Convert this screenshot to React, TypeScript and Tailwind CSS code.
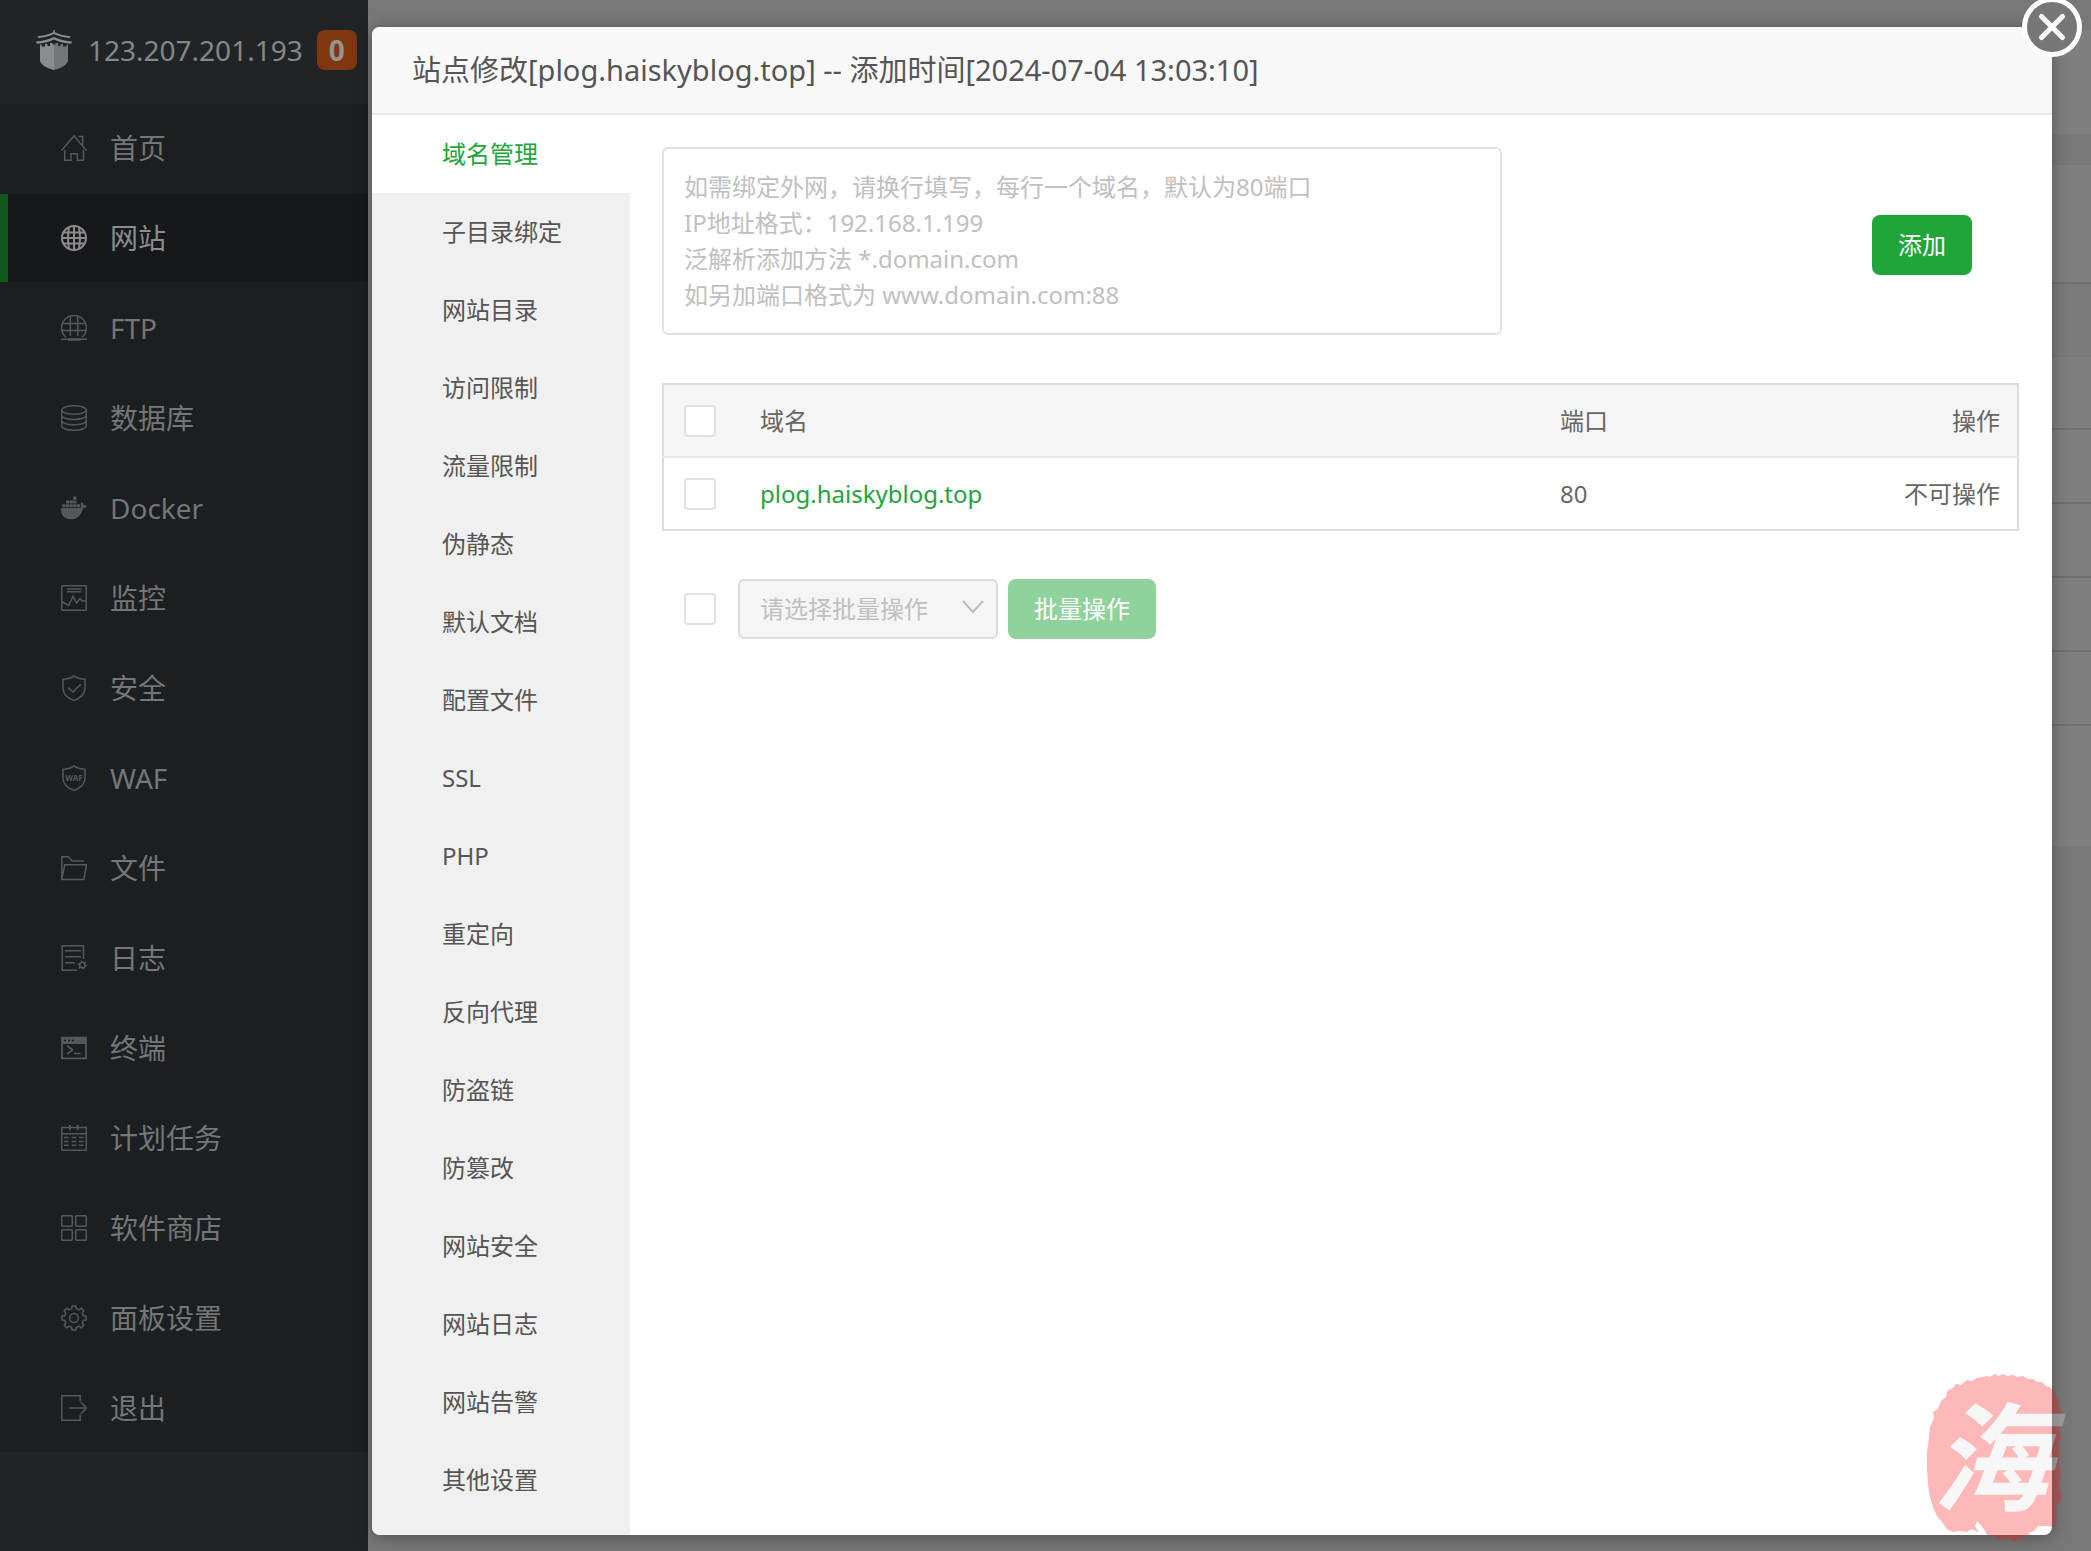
import type { ReactNode } from 'react';

const gearPath = (cx: number, cy: number, outer: number, inner: number, teeth: number) => {
  const points: string[] = [];
  const step = (Math.PI * 2) / teeth;
  for (let i = 0; i < teeth; i++) {
    const a = i * step - Math.PI / 2;
    const corners: [number, number][] = [
      [-0.3, inner],
      [-0.2, outer],
      [0.2, outer],
      [0.3, inner],
    ];
    for (const [offset, r] of corners) {
      const t = a + offset * step;
      points.push(`${(cx + r * Math.cos(t)).toFixed(2)} ${(cy + r * Math.sin(t)).toFixed(2)}`);
    }
  }
  return `M${points.join('L')}Z`;
};

const shield = 'M13 .8C16 3 20 4 24 4.3V13C24 19 19.500 23 13 25.400C6.500 23 2 19 2 13V4.300C6 4 10 3 13 .8Z';

const icons: Record<string, ReactNode> = {
  home: (
    <>
      <path d="M.5 15.500 13 .9l12.500 14.600M17.300 1.500h4.400V10" />
      <path d="M3.700 15v10.300h6.300v-6.500h6.300v6.500h6.200V15" />
    </>
  ),
  globe: (
    <g strokeWidth="2">
      <circle cx="13" cy="13" r="12" />
      <path d="M13 1v24M8 2.500C6.800 9 6.800 17 8 23.500M18 2.500c1.200 6.500 1.200 14.500 0 21M1 13h24M3 7.500h20M3 18.500h20" />
    </g>
  ),
  ftp: (
    <>
      <path d="M5 22.300A12.400 12.400 0 1 1 21 22.300" />
      <path d="M9.300 1.500v19.500M16.700 1.500v19.500M1.500 8.500h23M1 15.500h24M0 24.300h26" />
      <path d="M7 24.500h12.500" strokeWidth="2.500" />
    </>
  ),
  database: (
    <>
      <ellipse cx="13" cy="5" rx="12.300" ry="4.300" />
      <path d="M.7 5v16c0 2.200 5.500 4.300 12.300 4.300s12.300-2.100 12.300-4.300V5M.7 10.500c0 2.200 5.500 4 12.300 4s12.300-1.800 12.300-4M.7 15.800c0 2.200 5.500 4 12.300 4s12.300-1.800 12.300-4" />
    </>
  ),
  docker: (
    <g fill="currentColor" stroke="none">
      <path d="M12.200 1.500h3.200v3.200h-3.200zM5 5.400h3.200v3.200H5zM8.600 5.400h3.200v3.200H8.600zM12.200 5.400h3.200v3.200h-3.200zM1.400 9.300h3.200v3H1.400zM5 9.300h3.200v3H5zM8.600 9.300h3.200v3H8.600zM12.200 9.300h3.200v3h-3.200zM15.800 9.300H19v3h-3.200z" />
      <path d="M.1 12.900h18.400c1.300-.1 1.900-.6 1.500-1.700-.5-1.500-.3-3 .7-4.200 1.100.8 1.700 1.900 1.800 3.100 1.300-.2 2.600.1 3.500.9-.7 1.500-2 2.200-3.900 2.200C20.200 20.500 16 24.300 9.600 24.300 3.200 24.300-.3 20.500.1 12.900Z" />
    </g>
  ),
  monitor: (
    <>
      <rect x=".7" y=".7" width="24.600" height="24.600" rx="1" />
      <path d="M6 4h14.500M6 6.700h14.500M.7 16.500l6.800 4L12 11.500l3.500 6.500L19 13.500l2 2.500h4.300" />
    </>
  ),
  security: (
    <>
      <path d={shield} />
      <path d="M7.200 12.500 12 17l7.800-7.800" />
    </>
  ),
  waf: (
    <>
      <path d={shield} />
      <text x="13" y="16" textAnchor="middle" fontSize="8" fontWeight="700" fill="currentColor" stroke="none">
        WAF
      </text>
    </>
  ),
  folder: <path d="M.8 24.600V1.700h6.500L11.300 6H23M.8 24.600H23l2.400-14.900H3.700Z" />,
  log: (
    <>
      <path d="M22.500 14V.8H1.200v24.500H16M4 5.700h16M4 11.700h16M4 17.700h10" />
      <circle cx="21.300" cy="20" r="2.700" strokeWidth="1.600" />
      <circle cx="21.300" cy="20" r="4" strokeWidth="1.200" strokeDasharray="1.600 2.590" />
    </>
  ),
  terminal: (
    <>
      <path d="M1 2.700h24v20.600H1Z" strokeWidth="1.800" />
      <path d="M1 2h24v7H1z" fill="currentColor" stroke="none" />
      <path d="M3 5.500h2M7 5.500h2M11 5.500h2" stroke="#1b1f21" />
      <path d="m6.200 10.800 5.300 4-5.300 4.200M13 18.500h6.500" strokeWidth="1.700" />
    </>
  ),
  calendar: (
    <>
      <path d="M.7 2.500h24.600v22.800H.7ZM.7 8.700h24.600" />
      <path d="M9 0v5.300M16.700 0v5.300" strokeWidth="1.800" />
      <path d="M3 12.500h4.700M10.700 12.500h4.600M18 12.500h4.600M3 16.500h4.700M10.700 16.500h4.600M18 16.500h4.600M3 20.300h4.700M10.700 20.300h4.600M18 20.300h4.600" />
    </>
  ),
  apps: (
    <>
      <rect x=".7" y=".7" width="10.600" height="10.600" rx="1.200" />
      <rect x="14.700" y=".7" width="10.600" height="10.600" rx="1.200" />
      <rect x=".7" y="14.700" width="10.600" height="10.600" rx="1.200" />
      <rect x="14.700" y="14.700" width="10.600" height="10.600" rx="1.200" />
    </>
  ),
  settings: (
    <>
      <path d={gearPath(13, 13, 12.2, 9.6, 8)} strokeLinejoin="round" />
      <circle cx="13" cy="13" r="4.400" />
    </>
  ),
  logout: <path d="M19.200 6.500V.8H.8v24.500h18.400v-5.500M8.300 13h17M20 7.300l5.500 5.700-5.500 5.700" />,
};

const menu = [
  ['home', '首页'],
  ['globe', '网站'],
  ['ftp', 'FTP'],
  ['database', '数据库'],
  ['docker', 'Docker'],
  ['monitor', '监控'],
  ['security', '安全'],
  ['waf', 'WAF'],
  ['folder', '文件'],
  ['log', '日志'],
  ['terminal', '终端'],
  ['calendar', '计划任务'],
  ['apps', '软件商店'],
  ['settings', '面板设置'],
  ['logout', '退出'],
];

const tabs = [
  '域名管理', '子目录绑定', '网站目录', '访问限制', '流量限制', '伪静态', '默认文档', '配置文件', 'SSL',
  'PHP', '重定向', '反向代理', '防盗链', '防篡改', '网站安全', '网站日志', '网站告警', '其他设置',
];

const placeholder = [
  '如需绑定外网，请换行填写，每行一个域名，默认为80端口',
  'IP地址格式：192.168.1.199',
  '泛解析添加方法 *.domain.com',
  '如另加端口格式为 www.domain.com:88',
].join('\n');

function Check({ label }: { label: string }) {
  return (
    <input
      type="checkbox"
      aria-label={label}
      className="block size-8 shrink-0 appearance-none rounded border-2 border-[#dfe1e6] bg-white checked:bg-[#20a53a]"
    />
  );
}

function Logo() {
  return (
    <svg viewBox="0 0 36 40" className="h-10 w-9 shrink-0" aria-hidden="true">
      <path
        d="M1.500 6.200C7 6 12.500 4.300 17.300 2.300V0h1.400v2.300C23.500 4.300 29 6 34.500 6.200l-.8 1.900C28 7.800 23 6.300 18 4.100 13 6.300 8 7.800 2.300 8.100Z"
        fill="#8c8f90"
      />
      <path d="M0 11.500C6.500 11.300 12.500 9.500 18 7c5.500 2.500 11.500 4.300 18 4.500l-.8 2.200C29 13.400 23.500 11.800 18 9.400 12.500 11.800 7 13.400.8 13.700Z" fill="#8c8f90" />
      <path d="M4 14.500h1.500v2h3.500v-2.500h2.500v2h2.500v-3h2.500v1.500H18V40C11 38.500 5.500 35 4 31Z" fill="#8b8c8d" />
      <path d="M32 14.500h-1.500v2h-3.500v-2.500h-2.500v2H22v-3h-2.500v1.500H18V40c7-1.500 12.500-5 14-9Z" fill="#747677" />
    </svg>
  );
}

function Sidebar() {
  return (
    <aside className="w-[368px] shrink-0 bg-[#202426]">
      <div className="flex h-[104px] items-start gap-4 pt-[30px] pl-9">
        <Logo />
        <span className="text-[28px] leading-10 text-[#858788]">123.207.201.193</span>
        <span className="-ml-0.5 flex size-10 items-center justify-center rounded-lg bg-[#7f3611] text-[28px] font-bold text-[#949494]">
          0
        </span>
      </div>
      <nav className="flex flex-col gap-0.5 bg-[#1b1f21]">
        {menu.map(([icon, label], i) => (
          <a
            key={label}
            href={`#${icon}`}
            aria-current={i === 1 ? 'page' : undefined}
            className={
              i === 1
                ? 'flex h-[88px] items-center gap-[23px] border-l-8 border-[#10571c] bg-[#17181b] pl-[53px] text-[28px] text-[#8c8c8c]'
                : 'flex h-[88px] items-center gap-[23px] pl-[61px] text-[28px] text-[#747677]'
            }
          >
            <svg
              viewBox="0 0 26 26"
              className={i === 1 ? 'size-[26px] text-[#8c8c8c]' : 'size-[26px] text-[#55585a]'}
              fill="none"
              stroke="currentColor"
              strokeWidth="1.500"
              aria-hidden="true"
            >
              {icons[icon]}
            </svg>
            {label}
          </a>
        ))}
      </nav>
    </aside>
  );
}

function Backdrop() {
  return (
    <div className="flex-1 bg-[#787878] pl-5">
      <div className="h-[30px]" />
      <div className="h-[104px] bg-[#7f7f7f]" />
      <div className="h-[31px]" />
      <div className="flex h-[681px] flex-col bg-[#7f7f7f] pt-[117px]">
        <div className="h-[74px] border-t-2 border-[#6f6f6f] bg-[#7b7b7b]" />
        <div className="h-[74px] border-t border-b-2 border-t-[#777] border-b-[#6f6f6f]" />
        <div className="h-[74px] border-b-2 border-[#6f6f6f]" />
        <div className="h-[74px] border-b-2 border-[#6f6f6f]" />
        <div className="h-[74px] border-b-2 border-[#6f6f6f]" />
        <div className="h-[74px] border-b-2 border-[#6f6f6f]" />
      </div>
    </div>
  );
}

function Seal() {
  return (
    <svg
      viewBox="0 0 140 172"
      className="pointer-events-none absolute right-[26px] bottom-1.5 h-[172px] w-[140px] overflow-visible opacity-30"
      aria-hidden="true"
    >
      <path
        d="M58 4 62 3 65 4 70 1 73 3 78 1 82 3 88 2 92 4 98 3 103 6 108 6 112 9 117 9 121 13 126 15 129 19 131 24 135 28 134 34 137 38 135 44 137 50 134 57 136 64 133 72 135 80 134 92 136 100 134 112 137 124 134 130 131 133 132 140 131 150 131 154 120 153 113 153 109 158 103 160 106 162 98 163 100 168 93 165 90 170 82 165 74 167 68 163 62 162 59 156 52 148 50 153 54 160 47 156 42 159 34 158 28 159 22 156 17 149 12 143 8 134 5 124 3 112 2 96 2 80 4 64 5 54 9 45 8 39 13 36 16 28 21 24 22 18 28 15 31 11 36 12 42 7 47 8 52 5Z"
        fill="#ff1717"
      />
      <text x="7" y="129" fontSize="118" fontWeight="700" fontStyle="italic" fill="#e6e6e6" fontFamily='"Noto Sans CJK SC", sans-serif'>
        海
      </text>
    </svg>
  );
}

function DomainPanel() {
  return (
    <section className="min-w-0 flex-1 px-8 pt-8 pr-[33px]">
      <div className="flex items-center justify-between pr-[47px]">
        <textarea
          aria-label="域名"
          placeholder={placeholder}
          className="block h-[188px] w-[840px] resize-none overflow-hidden rounded-md border-2 border-[#dfe1e3] px-5 py-5 text-[24px] leading-9 placeholder:text-[#c0c0c0]"
        />
        <button type="button" className="mt-2 h-[60px] w-[100px] rounded-lg bg-[#20a53a] text-[24px] text-white">
          添加
        </button>
      </div>

      <table className="mt-12 w-full border-collapse border-2 border-[#dcdcdc] text-left text-[24px] text-[#666]">
        <thead>
          <tr className="h-[73px] border-b-2 border-[#e8e8e8] bg-[#f5f5f5]">
            <th className="w-[76px] pl-5">
              <Check label="全选" />
            </th>
            <th className="pl-[21px] font-normal">域名</th>
            <th className="w-[300px] font-normal">端口</th>
            <th className="w-[158px] pr-[17px] text-right font-normal">操作</th>
          </tr>
        </thead>
        <tbody>
          <tr className="h-[73px]">
            <td className="pl-5">
              <Check label="plog.haiskyblog.top" />
            </td>
            <td className="pl-[21px]">
              <a href="#domain" className="text-[#20a53a]">
                plog.haiskyblog.top
              </a>
            </td>
            <td>80</td>
            <td className="pr-[17px] text-right">不可操作</td>
          </tr>
        </tbody>
      </table>

      <div className="mt-12 flex items-center pl-[22px]">
        <Check label="选择全部域名" />
        <div className="relative ml-[22px]">
          <select
            aria-label="批量操作"
            disabled
            className="block h-[60px] w-[260px] appearance-none rounded-md border-2 border-[#dcdcdc] bg-[#f5f5f5] pl-5 text-[24px] text-[#c0c0c0] opacity-100"
          >
            <option>请选择批量操作</option>
          </select>
          <svg viewBox="0 0 22 14" className="pointer-events-none absolute top-[21px] right-3.5 h-3.5 w-[22px]" fill="none" stroke="#bbb" strokeWidth="2" aria-hidden="true">
            <path d="m1 1 10 11L21 1" />
          </svg>
        </div>
        <button type="button" disabled className="ml-2.5 h-[60px] w-[148px] rounded-lg bg-[#8fd29c] text-[24px] text-white">
          批量操作
        </button>
      </div>
    </section>
  );
}

export default function App() {
  return (
    <div className='relative flex min-h-screen font-["Noto_Sans","Noto_Sans_CJK_SC",sans-serif]'>
      <Sidebar />
      <Backdrop />

      <div className="absolute inset-0 flex pt-[27px] pr-[39px] pb-4 pl-[372px]">
        <div
          role="dialog"
          aria-labelledby="dialog-title"
          className="relative flex flex-1 flex-col rounded-lg bg-white shadow-[0_2px_16px_rgba(0,0,0,0.35)]"
        >
          <h1
            id="dialog-title"
            className="flex h-[88px] items-center rounded-t-lg border-b-2 border-[#ebebeb] bg-[#f8f8f8] pl-10 text-[29px] text-[#555]"
          >
            站点修改[plog.haiskyblog.top] -- 添加时间[2024-07-04 13:03:10]
          </h1>
          <button type="button" aria-label="关闭" className="absolute -top-[30px] -right-[30px] size-[60px]">
            <svg viewBox="0 0 60 60" fill="#777" stroke="#fff" strokeWidth="5" strokeLinecap="round" aria-hidden="true">
              <circle cx="30" cy="30" r="27.500" />
              <path d="m19.500 19.500 21 21M40.500 19.500l-21 21" />
            </svg>
          </button>

          <div className="flex flex-1">
            <div role="tablist" aria-label="站点设置" className="flex w-[258px] shrink-0 flex-col rounded-bl-lg bg-[#f0f0f0]">
              {tabs.map((tab, i) => (
                <button
                  key={tab}
                  type="button"
                  role="tab"
                  aria-selected={i === 0}
                  className={
                    i === 0
                      ? 'h-[78px] bg-white pl-[70px] text-left text-[24px] text-[#20a53a]'
                      : 'h-[78px] pl-[70px] text-left text-[24px] text-[#555]'
                  }
                >
                  {tab}
                </button>
              ))}
            </div>
            <DomainPanel />
          </div>
        </div>
      </div>
      <Seal />
    </div>
  );
}
